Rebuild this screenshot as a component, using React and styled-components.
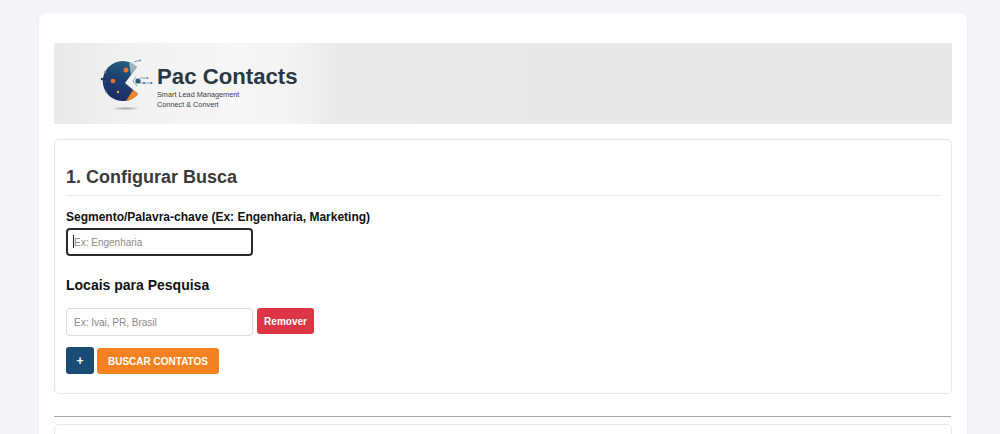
import React from "react";
import styled, { createGlobalStyle } from "styled-components";

const Global = createGlobalStyle`
  html, body { margin: 0; padding: 0; background: #f4f4f9; height: 434px; overflow: hidden; }
  body { font-family: "Liberation Sans", Arial, sans-serif; }
  * { box-sizing: border-box; }
`;
const Page = styled.div`
  padding: 13px 33px 0 39px;
`;
const Container = styled.main`
  width: 928px;
  background: #fff;
  border-radius: 8px;
  padding: 30px 15px 20px;
  box-shadow: 0 0 6px rgba(0, 0, 0, 0.03);
`;
const Banner = styled.header`
  height: 81px;
  width: 898px;
  padding: 12px 0 0 46px;
  display: flex;
  align-items: flex-start;
  gap: 2px;
  background: linear-gradient(90deg, #e9e9e9 0%, #f1f1f1 8%, #f6f6f6 20%, #f4f4f4 26%, #e9e9e9 32%, #e8e8e8 100%);
`;
const BrandText = styled.div`
  display: flex;
  flex-direction: column;
`;
const BrandName = styled.div`
  font-size: 22.2px;
  line-height: 26px;
  font-weight: 700;
  margin-top: 9px;
  color: #2c3744;
`;
const BrandTag = styled.div`
  font-size: 7.3px;
  line-height: 10px;
  color: #3c4148;
`;
const Card = styled.section`
  width: 898px;
  height: ${(p) => p.$height};
  margin-top: ${(p) => p.$top};
  border: 1px solid #e6e6e6;
  border-radius: 5px;
  padding: 0 11px;
  background: #fff;
`;
const Title = styled.h2`
  margin: 0;
  padding: 26px 0 7px;
  font-size: 18px;
  line-height: 22px;
  font-weight: 700;
  color: #3a3a3a;
  border-bottom: 1px solid #e8e8e8;
`;
const Label = styled.label`
  display: block;
  margin-top: 14px;
  font-size: 12px;
  line-height: 14px;
  font-weight: 700;
  color: #111;
`;
const FieldWrap = styled.div`
  position: relative;
  width: 187px;
  margin-top: 4px;
`;
const Caret = styled.span`
  position: absolute;
  left: 7px;
  top: 7px;
  width: 1px;
  height: 13px;
  background: #222;
`;
const Input = styled.input`
  display: block;
  width: 187px;
  height: 28px;
  border: ${(p) => (p.$focus ? "2px solid #2a2a2a" : "1px solid #dcdcdc")};
  border-radius: 4px;
  padding: 0 ${(p) => (p.$focus ? "6px" : "7px")};
  font-family: inherit;
  font-size: 10px;
  background: #fff;
  outline: none;
  &::placeholder { color: #8a8a8a; opacity: 1; }
`;
const SubTitle = styled.h3`
  margin: 21px 0 0;
  font-size: 14px;
  line-height: 16px;
  font-weight: 700;
  color: #111;
`;
const Row = styled.div`
  display: flex;
  align-items: flex-start;
  gap: ${(p) => p.$gap};
  margin-top: ${(p) => p.$top};
`;
const Button = styled.button`
  height: ${(p) => p.$h || "26px"};
  width: ${(p) => p.$w};
  border: 0;
  border-radius: 3px;
  padding: 0;
  margin-top: ${(p) => p.$mt || "0"};
  font-family: inherit;
  font-size: ${(p) => p.$size || "10px"};
  font-weight: 700;
  color: #fff;
  background: ${(p) => p.$bg};
`;
const Rule = styled.hr`
  width: 897px;
  margin: 22px 0 0;
  border: 0;
  border-top: 1px solid #a9a9a9;
`;

const Logo = () => (
  <svg width="55" height="62" viewBox="0 0 55 62" aria-hidden="true">
    <defs>
      <radialGradient id="shadow">
        <stop offset="0" stopColor="#a5a5a5" />
        <stop offset="1" stopColor="#a5a5a5" stopOpacity="0" />
      </radialGradient>
      <linearGradient id="body" x1="0.7" y1="0" x2="0.3" y2="1">
        <stop offset="0" stopColor="#24607c" />
        <stop offset="0.5" stopColor="#1c3f70" />
        <stop offset="1" stopColor="#1d2a66" />
      </linearGradient>
    </defs>
    <ellipse cx="26" cy="53.5" rx="15" ry="2" fill="url(#shadow)" />
    <path d="M25 28 L37 12 A20 20 0 1 0 38 39 Z" fill="url(#body)" />
    <path d="M38 39 A20 20 0 0 1 26 46 L33 35 Z" fill="#f58220" />
    <path d="M33 7.5 L37 12 L31 20 L29 8 Z" fill="#c6d0d6" opacity="0.75" />
    <circle cx="26" cy="15" r="2.5" fill="#e8742a" />
    <circle cx="13" cy="26" r="2.3" fill="#e8742a" />
    <circle cx="18" cy="37" r="1.2" fill="#f2a04a" />
    <circle cx="2" cy="24" r="1.3" fill="#33485c" />
    <circle cx="5" cy="27" r="1.2" fill="#33485c" />
    <circle cx="5" cy="17" r="1.2" fill="#7a9bb3" />
    <circle cx="6" cy="37" r="1" fill="#7a9bb3" />
    <circle cx="38" cy="26" r="2.6" fill="#2e5a7a" />
    <path d="M34 7 L39 5.5 M40 23 H47 M40 28 H51 M36 22 L33 26 L37 31" stroke="#5f8fa8" strokeWidth="0.8" fill="none" />
    <circle cx="40" cy="5.5" r="1" fill="#5f8fa8" />
    <circle cx="47.5" cy="23" r="0.9" fill="#5f8fa8" />
    <circle cx="44" cy="28" r="1" fill="#3f6f8f" />
    <circle cx="51.5" cy="28" r="1" fill="#3f6f8f" />
  </svg>
);

export default function App() {
  return (
    <Page>
      <Global />
      <Container>
        <Banner>
          <Logo />
          <BrandText>
            <BrandName>Pac Contacts</BrandName>
            <BrandTag>Smart Lead Management</BrandTag>
            <BrandTag>Connect &amp; Convert</BrandTag>
          </BrandText>
        </Banner>
        <Card $top="15px" $height="255px">
          <Title>1. Configurar Busca</Title>
          <Label htmlFor="segmento">Segmento/Palavra-chave (Ex: Engenharia, Marketing)</Label>
          <FieldWrap>
            <Input id="segmento" $focus placeholder="Ex: Engenharia" />
            <Caret />
          </FieldWrap>
          <SubTitle>Locais para Pesquisa</SubTitle>
          <Row $top="15px" $gap="4px">
            <Input placeholder="Ex: Ivai, PR, Brasil" />
            <Button $w="57px" $bg="#dc3545">Remover</Button>
          </Row>
          <Row $top="11px" $gap="3px">
            <Button $w="28px" $h="27px" $bg="#1a4d75" $size="12px">+</Button>
            <Button $w="122px" $mt="1px" $bg="#f58220">BUSCAR CONTATOS</Button>
          </Row>
        </Card>
        <Rule />
        <Card $top="7px" $height="60px" />
      </Container>
    </Page>
  );
}
